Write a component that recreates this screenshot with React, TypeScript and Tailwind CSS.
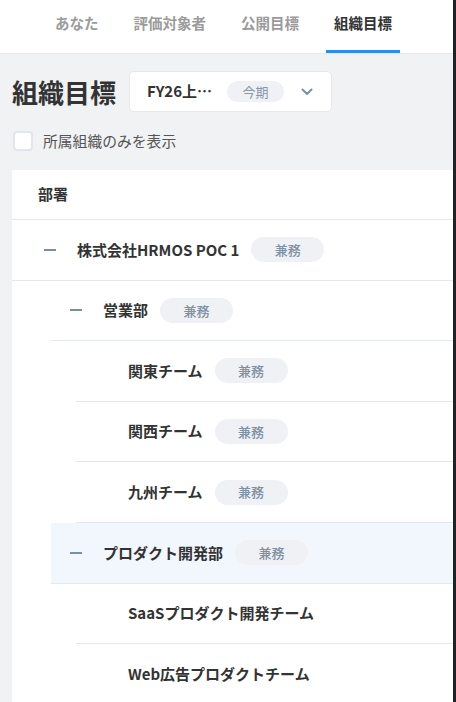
import React from "react";

const font = { fontFamily: '"Noto Sans CJK JP", "Noto Sans", sans-serif' };

function Minus() {
  return <span className="block w-[12px] h-[2px] bg-[#7b8fa4] shrink-0" />;
}

function Badge() {
  return (
    <span className="ml-[12px] inline-flex items-center justify-center w-[73px] h-[25px] rounded-full bg-[#eff1f4] text-[13px] font-medium text-[#7f90a3]">
      兼務
    </span>
  );
}

type Row = { name: string; level: 0 | 1 | 2; badge: boolean; highlight?: boolean };

const rows: Row[] = [
  { name: "株式会社HRMOS POC 1", level: 0, badge: true },
  { name: "営業部", level: 1, badge: true },
  { name: "関東チーム", level: 2, badge: true },
  { name: "関西チーム", level: 2, badge: true },
  { name: "九州チーム", level: 2, badge: true },
  { name: "プロダクト開発部", level: 1, badge: true, highlight: true },
  { name: "SaaSプロダクト開発チーム", level: 2, badge: false },
  { name: "Web広告プロダクトチーム", level: 2, badge: false },
];

function TreeRow({ row }: { row: Row }) {
  const levelClass =
    row.level === 0 ? "ml-0 pl-[32px]" : row.level === 1 ? "ml-[39px] pl-[19px]" : "ml-[64px] pl-[52px]";
  return (
    <div
      className={`h-[60.6px] shrink-0 flex items-center border-b border-[#e4e8ec] ${levelClass} ${
        row.highlight ? "bg-[#f2f7fd]" : ""
      }`}
    >
      {row.level < 2 && (
        <>
          <Minus />
          <span className="w-[21px] shrink-0" />
        </>
      )}
      <span className="text-[15px] font-bold text-[#333333] whitespace-nowrap">{row.name}</span>
      {row.badge && <Badge />}
    </div>
  );
}

export default function App() {
  const tabs = ["あなた", "評価対象者", "公開目標", "組織目標"];
  return (
    <div className="w-[456px] h-[702px] flex overflow-hidden bg-[#f1f2f4]" style={font}>
      <div className="flex-1 min-w-0 flex flex-col">
        {/* Tabs */}
        <div className="h-[54px] shrink-0 bg-white border-b border-[#e6e8eb] flex items-stretch pl-[47px] gap-[19px]">
          {tabs.map((t, i) => {
            const active = i === tabs.length - 1;
            return (
              <div key={t} className="relative px-[8px] pt-[10px]">
                <span
                  className={`text-[14.5px] font-bold ${active ? "text-[#333333]" : "text-[#9b9b9b]"}`}
                >
                  {t}
                </span>
                {active && <span className="absolute left-0 right-0 bottom-0 h-[3px] bg-[#2f8af5]" />}
              </div>
            );
          })}
        </div>

        {/* Title row */}
        <div className="mt-[17px] px-3 flex items-center gap-[13px]">
          <h1 className="text-[26px] font-bold text-[#333333] leading-none">組織目標</h1>
          <div className="w-[203px] h-[41px] bg-white border border-[#e6e8eb] rounded-[5px] flex items-center pl-[17px] pr-[18px]">
            <span className="text-[15px] font-bold text-[#333333]">FY26上…</span>
            <span className="ml-[15px] inline-flex items-center justify-center w-[57px] h-[21px] rounded-full bg-[#eff1f4] text-[13px] text-[#8596a8]">
              今期
            </span>
            <svg className="ml-auto" width="12" height="8" viewBox="0 0 12 8" fill="none">
              <path d="M1.5 1.5L6 6L10.5 1.5" stroke="#7b8ea3" strokeWidth="2" strokeLinecap="round" strokeLinejoin="round" />
            </svg>
          </div>
        </div>

        {/* Checkbox */}
        <label className="mt-[19px] ml-[13px] h-[20px] flex items-center gap-[10px]">
          <span className="w-[20px] h-[20px] rounded-[4px] bg-white border-2 border-[#e2e5e9]" />
          <span className="text-[14.8px] leading-none text-[#555555]">所属組織のみを表示</span>
        </label>

        {/* Table */}
        <div className="mt-[19px] ml-3 flex-1 bg-white flex flex-col">
          <div className="h-[50px] shrink-0 border-b border-[#e4e8ec] flex items-center pl-[26px]">
            <span className="text-[15px] font-bold text-[#333333]">部署</span>
          </div>
          {rows.map((r) => (
            <TreeRow key={r.name} row={r} />
          ))}
        </div>
      </div>
      <div className="w-[3px] shrink-0 bg-[#1f2328]" />
    </div>
  );
}
